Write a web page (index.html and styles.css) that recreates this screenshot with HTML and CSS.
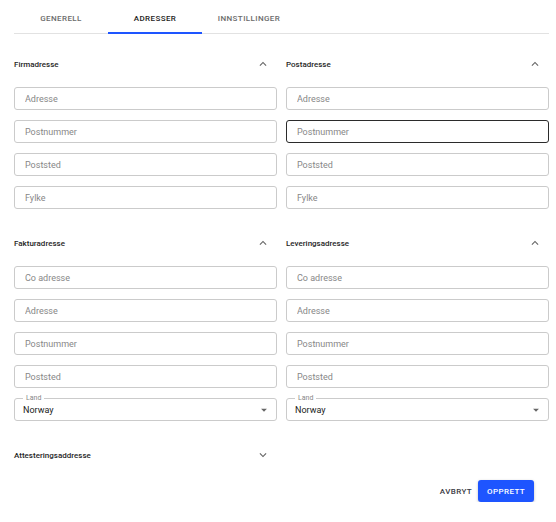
FILE: index.html
```html
<!DOCTYPE html>
<html lang="no">
<head>
<meta charset="utf-8">
<title>Adresser</title>
<link rel="stylesheet" href="styles.css">
</head>
<body>
<div class="page">
  <div class="tabs">
    <div class="tab">Generell</div>
    <div class="tab active">Adresser</div>
    <div class="tab">Innstillinger</div>
  </div>

  <div class="grid">
    <section class="group">
      <div class="head"><span>Firmadresse</span>
        <svg class="chev" viewBox="0 0 24 24"><path d="M12 8l-6 6 1.41 1.41L12 10.83l4.59 4.58L18 14z"/></svg></div>
      <div class="fields">
        <input class="field" placeholder="Adresse">
        <input class="field" placeholder="Postnummer">
        <input class="field" placeholder="Poststed">
        <input class="field" placeholder="Fylke">
      </div>
    </section>
    <section class="group">
      <div class="head"><span>Postadresse</span>
        <svg class="chev" viewBox="0 0 24 24"><path d="M12 8l-6 6 1.41 1.41L12 10.83l4.59 4.58L18 14z"/></svg></div>
      <div class="fields">
        <input class="field" placeholder="Adresse">
        <input class="field hover" placeholder="Postnummer">
        <input class="field" placeholder="Poststed">
        <input class="field" placeholder="Fylke">
      </div>
    </section>

    <section class="group">
      <div class="head"><span>Fakturadresse</span>
        <svg class="chev" viewBox="0 0 24 24"><path d="M12 8l-6 6 1.41 1.41L12 10.83l4.59 4.58L18 14z"/></svg></div>
      <div class="fields">
        <input class="field" placeholder="Co adresse">
        <input class="field" placeholder="Adresse">
        <input class="field" placeholder="Postnummer">
        <input class="field" placeholder="Poststed">
        <div class="select">
          <span class="legend">Land</span>
          <span class="value">Norway</span>
          <svg class="arrow" viewBox="0 0 24 24"><path d="M7 10l5 5 5-5z"/></svg>
        </div>
      </div>
    </section>
    <section class="group">
      <div class="head"><span>Leveringsadresse</span>
        <svg class="chev" viewBox="0 0 24 24"><path d="M12 8l-6 6 1.41 1.41L12 10.83l4.59 4.58L18 14z"/></svg></div>
      <div class="fields">
        <input class="field" placeholder="Co adresse">
        <input class="field" placeholder="Adresse">
        <input class="field" placeholder="Postnummer">
        <input class="field" placeholder="Poststed">
        <div class="select">
          <span class="legend">Land</span>
          <span class="value">Norway</span>
          <svg class="arrow" viewBox="0 0 24 24"><path d="M7 10l5 5 5-5z"/></svg>
        </div>
      </div>
    </section>

    <section class="group">
      <div class="head"><span>Attesteringsaddresse</span>
        <svg class="chev" viewBox="0 0 24 24"><path d="M16.59 8.59L12 13.17 7.41 8.59 6 10l6 6 6-6z"/></svg></div>
    </section>
  </div>

  <div class="actions">
    <button class="btn text">Avbryt</button>
    <button class="btn primary">Opprett</button>
  </div>
</div>
</body>
</html>
```

FILE: styles.css
```css
* { box-sizing: border-box; }
html, body { margin: 0; padding: 0; background: #fff; }
body { font-family: Roboto, "Liberation Sans", Arial, sans-serif; color: #222; }

.page { width: 556px; padding: 0 7px 0 14px; }

.tabs {
  display: flex;
  height: 34px;
  border-bottom: 1px solid #e2e2e2;
}
.tab {
  position: relative;
  width: 94px;
  padding-top: 4px;
  display: flex;
  align-items: center;
  justify-content: center;
  font-size: 8px;
  font-weight: 500;
  letter-spacing: 0.4px;
  text-transform: uppercase;
  color: #6b6b6b;
}
.tab.active { color: #222; }
.tab.active::after {
  content: "";
  position: absolute;
  left: 0; right: 0; bottom: -1px;
  height: 2px;
  background: #1e55ff;
}

.grid {
  display: grid;
  grid-template-columns: 263px 263px;
  column-gap: 9px;
  row-gap: 23px;
  padding-top: 19px;
}

.head {
  height: 22px;
  display: flex;
  align-items: center;
  justify-content: space-between;
  font-size: 8px;
  font-weight: 500;
  color: #262626;
}
.chev {
  width: 14px;
  height: 14px;
  margin-right: 7px;
  fill: #666;
}

.fields {
  margin-top: 12px;
  display: flex;
  flex-direction: column;
  gap: 10px;
}
.field {
  display: block;
  width: 100%;
  height: 23px;
  margin: 0;
  padding: 0 10px;
  border: 1px solid #cbcbcb;
  border-radius: 3px;
  font-family: inherit;
  font-size: 9px;
  color: #222;
  background: #fff;
  outline: none;
}
.field::placeholder { color: #878787; opacity: 1; }
.field.hover { border-color: #2b2b2b; }

.select {
  position: relative;
  height: 23px;
  border: 1px solid #cbcbcb;
  border-radius: 3px;
  display: flex;
  align-items: center;
  justify-content: space-between;
  padding: 0 5px 0 8px;
}
.legend {
  position: absolute;
  top: -5px;
  left: 8px;
  padding: 0 3px;
  background: #fff;
  font-size: 7px;
  line-height: 8px;
  color: #878787;
}
.value { font-size: 9px; color: #222; }
.arrow { width: 14px; height: 14px; fill: #666; }

.actions {
  display: flex;
  justify-content: flex-end;
  align-items: center;
  gap: 6px;
  margin-top: 14px;
  padding-right: 15px;
}
.btn {
  font-family: inherit;
  font-size: 8px;
  font-weight: 500;
  letter-spacing: 0.4px;
  text-transform: uppercase;
  border: none;
  height: 22px;
  border-radius: 3px;
  cursor: pointer;
}
.btn.text { background: none; color: #3a3a44; padding: 0; }
.btn.primary {
  background: #1e55ff;
  color: #fff;
  padding: 0 9px;
  box-shadow: 0 1px 3px rgba(0,0,0,0.25);
}
```
